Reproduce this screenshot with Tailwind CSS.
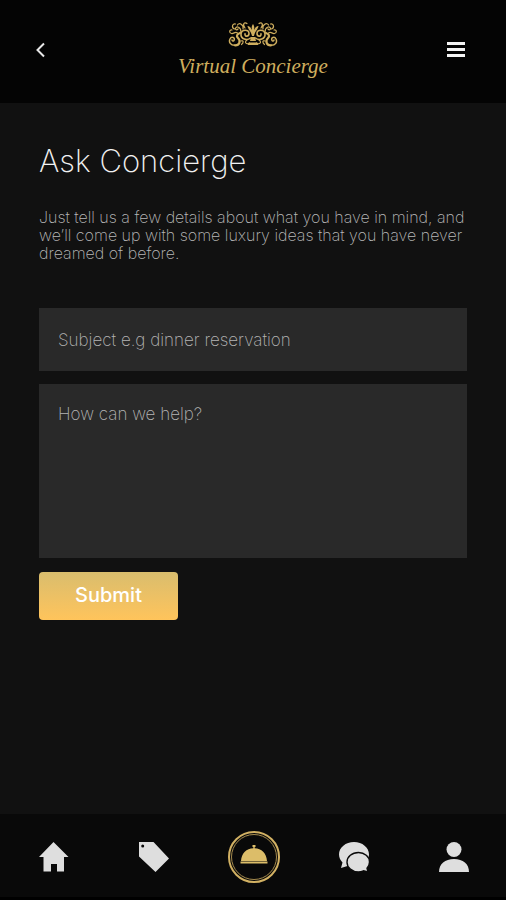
<!DOCTYPE html>
<html lang="en">
<head>
  <meta charset="UTF-8">
  <meta name="viewport" content="width=device-width, initial-scale=1.0">
  <title>Ask Concierge</title>
  <script src="https://cdn.jsdelivr.net/npm/@tailwindcss/browser@4"></script>
</head>
<body class="flex min-h-screen flex-col bg-[#111111] font-['Inter',sans-serif] text-white">
  <!-- Header -->
  <header class="flex h-[103px] items-start justify-between bg-[#040404] px-[35px] pt-5">
    <button type="button" aria-label="Back" class="flex h-[60px] w-6 items-center">
      <svg class="h-4 w-3" viewBox="0 0 12 16" fill="none" stroke="#e8e8e8" stroke-width="2"><path d="M9 1.5 2.5 8 9 14.5"/></svg>
    </button>
    <a href="#" class="flex flex-col items-center text-[#cfae5e]">
      <svg class="h-7 w-[50px]" viewBox="0 0 50 28" aria-hidden="true">
        <defs>
          <g id="scroll" fill="none" stroke="currentColor" stroke-linecap="round">
            <path stroke-width="1.6" d="M22.500 18C19 21 12.500 19 13 14C13.500 9 21 9 21 13.500C21 17 16.500 17 17 13.800"/>
            <path stroke-width="2.200" d="M12 13C9 14 8 16 10 18C13 21 11.500 25.500 7 25.300"/>
            <path stroke-width="1.500" d="M7 25.300C2.500 25.500 .5 22 2 19C3.500 16 7.500 17.500 6 20.500C5.500 21.500 4 21 4 20"/>
            <path stroke-width="1.200" d="M13 12C13 7 8 5.500 7.500 8.500C7.500 10.500 10 10 10 8.800M6.500 9C3 7.500 4.500 3 7.500 4M15 9C16 4.500 11 2 9.500 5M17 8C14 4 16.500 1.500 19 3.500"/>
            <path stroke-width="1.200" d="M9.500 13C7 11 6 14 3.500 13.500C1 13 1 9.500 4 10M13 21C15.500 20 16 22.500 13.500 24.500M19 20C16 22 18 25 21.500 23"/>
          </g>
        </defs>
        <use href="#scroll"/>
        <use href="#scroll" transform="matrix(-1 0 0 1 50 0)"/>
        <path fill="currentColor" d="M25 4C26.500 6 26.500 8 26 10C27 8 28.500 5.500 30.500 6C30 9.500 27 11 26 16H24C23 11 20 9.500 19.500 6C21.500 5.500 23 8 24 10C23.500 8 23.500 6 25 4ZM23 17H27L28 21H22ZM21 22.500H29L30.500 25H19.500Z"/>
      </svg>
      <span class="font-['Liberation_Serif',serif] text-[21px] leading-9 whitespace-nowrap italic">Virtual Concierge</span>
    </a>
    <button type="button" aria-label="Menu" class="flex h-[60px] w-6 items-center justify-start">
      <svg class="h-4 w-5" viewBox="0 0 20 16" fill="#f4f4f4"><path d="M0 0H18V3H0ZM0 6H18V9H0ZM0 12H18V15H0Z"/></svg>
    </button>
  </header>

  <!-- Request form -->
  <main class="flex-1 px-[39px] pt-10">
    <h1 class="text-[31px] leading-9 font-extralight text-[#f2f2f2]">Ask Concierge</h1>
    <p class="mt-[29px] text-[16px] leading-[18px] font-extralight text-[#b8b8b8]">Just tell us a few details about what you have in mind, and we’ll come up with some luxury ideas that you have never dreamed of before.</p>
    <form class="mt-[46px] flex flex-col items-start">
      <input type="text" aria-label="Subject" placeholder="Subject e.g dinner reservation" class="h-[63px] w-full bg-[#292929] px-[19px] text-[17px] font-extralight placeholder:text-[#b4b4b4]">
      <textarea aria-label="How can we help?" placeholder="How can we help?" class="mt-[13px] h-[174px] w-full resize-none bg-[#292929] px-[19px] py-[18px] text-[17px] leading-6 font-extralight placeholder:text-[#b4b4b4]"></textarea>
      <button type="submit" class="mt-[14px] h-12 w-[139px] rounded bg-linear-to-b from-[#d9bd6d] to-[#ffc45b] pb-0.5 text-[20px] font-medium">Submit</button>
    </form>
  </main>

  <!-- Bottom navigation -->
  <nav class="grid h-[86px] grid-cols-5 items-center justify-items-center border-b-3 border-black bg-[#090909] pt-0.5 pr-0.5 pl-1 text-[#dedede]">
    <a href="#" aria-label="Home">
      <svg class="h-[30px] w-[30px]" viewBox="0 0 30 30" fill="currentColor"><path d="M14.500 0 29.500 15H25V29.500H18V22H12V29.500H4.500V15H0Z"/></svg>
    </a>
    <a href="#" aria-label="Offers">
      <svg class="h-[30px] w-[30px]" viewBox="0 0 30 30" fill="currentColor"><path fill-rule="evenodd" d="M0 0H14.500L30 16.500 16.500 30 0 14.500ZM5.200 4A1.500 1.500 0 1 0 2.200 4A1.500 1.500 0 1 0 5.200 4Z"/></svg>
    </a>
    <a href="#" aria-label="Concierge">
      <svg class="h-[52px] w-[52px]" viewBox="0 0 52 52" fill="none" stroke="#d2b163">
        <circle cx="26" cy="26" r="25" stroke-width="2"/>
        <circle cx="26" cy="26" r="22.500" stroke-width="1" stroke="#a58b4e"/>
        <path stroke="none" fill="#dcbd69" d="M24.500 14H27.500V16H26.700V17.200C33.500 17.500 38.500 22 39 30H13C13.500 22 18.500 17.500 25.300 17.200V16H24.500ZM12.500 30.500H39.500V32.500H12.500Z"/>
      </svg>
    </a>
    <a href="#" aria-label="Messages">
      <svg class="h-[30px] w-[30px]" viewBox="0 0 30 30" fill="currentColor">
        <path d="M15 0C23.300 0 30 5.500 30 12.500C30 20 23 25 15 25C12.500 25 10.500 24.700 8.500 24L2 26L3.500 20.500C1.500 18.500 0 15.500 0 12.500C0 5.500 6.700 0 15 0Z"/>
        <path stroke="#090909" stroke-width="1.400" d="M19.500 10.500C25.500 10.500 30.500 14.700 30.500 20C30.500 22.500 29.500 24.500 28 26.200L29 30L24.500 28.800C23 29.500 21.300 30 19.500 30C13 30 8 25.500 8 20.200C8 14.700 13 10.500 19.500 10.500Z"/>
      </svg>
    </a>
    <a href="#" aria-label="Profile">
      <svg class="h-[30px] w-[30px]" viewBox="0 0 30 30" fill="currentColor"><circle cx="15" cy="7.500" r="7.500"/><path d="M0 30C0 22 6 17 15 17S30 22 30 30Z"/></svg>
    </a>
  </nav>
</body>
</html>
